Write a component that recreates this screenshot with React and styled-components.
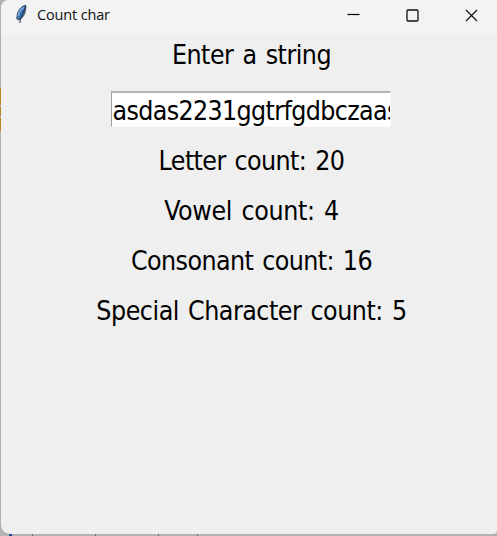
import React from 'react';
import styled, { createGlobalStyle } from 'styled-components';

const GlobalStyle = createGlobalStyle`
  * { box-sizing: border-box; }
  body { margin: 0; overflow: hidden; }
`;

const Desktop = styled.div`
  width: 497px;
  height: 536px;
  padding-left: 1px;
  background:
    linear-gradient(#1b4f9c, #1b4f9c) 9px 534px / 3px 2px no-repeat,
    linear-gradient(#6f6f6f, #6f6f6f) 32px 534px / 1px 2px no-repeat,
    linear-gradient(#6f6f6f, #6f6f6f) 95px 534px / 1px 2px no-repeat,
    linear-gradient(#6f6f6f, #6f6f6f) 158px 534px / 1px 2px no-repeat,
    linear-gradient(#6f6f6f, #6f6f6f) 197px 534px / 1px 2px no-repeat,
    linear-gradient(#b88a20, #b88a20) 0 88px / 1px 17px no-repeat,
    linear-gradient(#b88a20, #b88a20) 0 107px / 1px 9px no-repeat,
    linear-gradient(#b88a20, #b88a20) 0 118px / 1px 13px no-repeat,
    #b2b2b2;
`;

const Window = styled.main`
  display: flex;
  flex-direction: column;
  height: 534px;
  overflow: hidden;
  background: #efefef;
  border-radius: 8px 0 4px 9px;
`;

const TitleBar = styled.header`
  display: flex;
  flex: none;
  align-items: center;
  height: 34px;
  padding: 0 19px 4px 12px;
  background: #f3f3f3;
`;

const Title = styled.h1`
  flex: 1;
  margin: 0 0 0 8px;
  color: #111;
  font: 400 14.5px/20px "Open Sans", "Noto Sans", sans-serif;
  letter-spacing: -0.15px;
`;

const Controls = styled.div`
  display: flex;
  gap: 46px;
`;

const ControlButton = styled.button`
  display: flex;
  padding: 0;
  border: 0;
  background: none;
`;

const Content = styled.section`
  display: flex;
  flex-direction: column;
  align-items: center;
  padding-left: 3px;
`;

const Line = styled.div`
  height: 50px;
  padding: 1px 0 0 2px;
  color: #000;
  font: 400 26.5px/40px "DejaVu Sans Condensed", "DejaVu Sans", sans-serif;
  font-stretch: condensed;
  letter-spacing: ${(p) => p.$spacing}px;
  word-spacing: 2px;
  white-space: pre;
`;

const Entry = styled.div`
  width: 280px;
  height: 36px;
  margin: 7px 0 13px;
  padding-left: 1px;
  overflow: hidden;
  border: solid;
  border-width: 2px 1px 1px 1px;
  border-color: #b4b4b4 #fafafa #fafafa #a0a0a0;
  background: #fff;
  color: #000;
  font: 400 26.5px/35px "DejaVu Sans Condensed", "DejaVu Sans", sans-serif;
  font-stretch: condensed;
  letter-spacing: -0.64px;
  white-space: nowrap;
`;

const Feather = () => (
  <svg width="16" height="22" viewBox="0 0 16 22">
    <path d="M12.8 1.2C8 2 4.2 7 4 12.5l-.3 2.3 2 1.3c4.5-2 7.6-7.5 7.1-14.9Z" fill="#3f73b5" stroke="#45505b" strokeWidth="1" />
    <path d="M11.2 3.3C7.5 5.3 5.7 8.5 5.2 12" fill="none" stroke="#79aee5" strokeWidth="1.5" />
    <path d="M12.6 2C11 8 8 11 6.8 19" fill="none" stroke="#25313d" strokeWidth="1" />
  </svg>
);

const counts = [
  { label: 'Letter count', value: 20, spacing: -0.6 },
  { label: 'Vowel count', value: 4, spacing: -0.33 },
  { label: 'Consonant count', value: 16, spacing: -0.6 },
  { label: 'Special Character count', value: 5, spacing: -0.48 },
];

export default function App() {
  return (
    <Desktop>
      <GlobalStyle />
      <Window>
        <TitleBar>
          <Feather />
          <Title>Count char</Title>
          <Controls>
            <ControlButton aria-label="Minimize">
              <svg width="13" height="13"><path d="M.5 5.5h12" stroke="#000" strokeWidth="1.2" /></svg>
            </ControlButton>
            <ControlButton aria-label="Maximize">
              <svg width="13" height="13"><rect x="1" y="1" width="11" height="11" rx="1" fill="none" stroke="#111" strokeWidth="1.3" /></svg>
            </ControlButton>
            <ControlButton aria-label="Close">
              <svg width="13" height="13"><path d="m1 1 11 11M12 1 1 12" stroke="#111" strokeWidth="1.2" /></svg>
            </ControlButton>
          </Controls>
        </TitleBar>
        <Content>
          <Line $spacing={-0.5}>Enter a string</Line>
          <Entry>asdas2231ggtrfgdbczaas</Entry>
          {counts.map((c) => (
            <Line key={c.label} $spacing={c.spacing}>{`${c.label}: ${c.value}`}</Line>
          ))}
        </Content>
      </Window>
    </Desktop>
  );
}
